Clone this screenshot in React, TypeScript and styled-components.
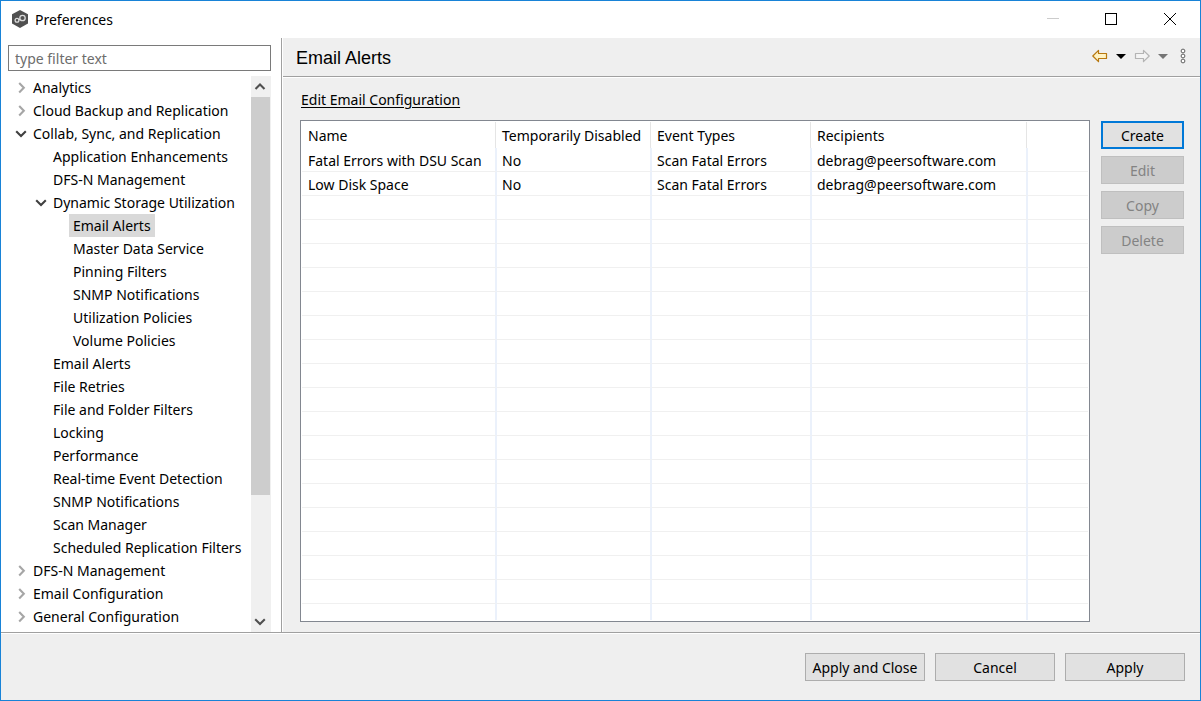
import React, { useState } from "react";
import styled, { createGlobalStyle, css } from "styled-components";

const FONT = '"Noto Sans", "Open Sans", sans-serif';

const GlobalStyle = createGlobalStyle`
  *, *::before, *::after { box-sizing: border-box; }
  body { margin: 0; background: #efefef; }
  body, button, input { font-family: ${FONT}; font-size: 14px; color: #000; }
`;

const Window = styled.div`
  display: flex;
  flex-direction: column;
  min-height: 100vh;
  border: 1px solid #1883d7;
  background: #efefef;
`;

const TitleBar = styled.header`
  display: flex;
  align-items: center;
  height: 37px;
  padding: 0 0 2px 10px;
  gap: 6px;
  background: #fff;
`;

const WindowTitle = styled.h1`
  flex: 1;
  margin: 0;
  padding-top: 2px;
  font-size: 14px;
  font-weight: 400;
  line-height: 20px;
`;

const IconButton = styled.button<{ $width: number; $height: number }>`
  display: flex;
  align-items: center;
  justify-content: center;
  flex: none;
  width: ${(p) => p.$width}px;
  height: ${(p) => p.$height}px;
  padding: 0;
  border: 0;
  background: transparent;
`;

const WindowControls = styled.div`
  display: flex;
`;

const Body = styled.div`
  display: flex;
  flex: 1;
  border-bottom: 1px solid #a0a0a0;
`;

const Sidebar = styled.nav`
  display: flex;
  flex-direction: column;
  flex: none;
  width: 281px;
  padding: 7px 10px 0 7px;
  border-right: 1px solid #a0a0a0;
  background: #fff;
`;

const FilterInput = styled.input`
  height: 26px;
  margin-bottom: 5px;
  padding: 0 6px;
  border: 1px solid #7a7a7a;
  border-radius: 0;
  background: #fff;
  outline: none;
  &::placeholder { color: #6d6d6d; opacity: 1; }
`;

const TreeArea = styled.div`
  display: flex;
  flex: 1;
`;

const TreeList = styled.ul`
  flex: 1;
  margin: 0;
  padding: 0;
  list-style: none;
`;

const TreeRow = styled.div<{ $level: number }>`
  display: flex;
  align-items: center;
  height: 23px;
  padding-left: ${(p) => 4 + p.$level * 20}px;
`;

const TreeSlot = styled.span`
  display: flex;
  justify-content: flex-end;
  flex: none;
  width: 17px;
`;

const TreeLabel = styled.button<{ $selected?: boolean }>`
  height: 23px;
  padding: 0 4px;
  border: 0;
  background: ${(p) => (p.$selected ? "#d9d9d9" : "transparent")};
  line-height: 23px;
  white-space: nowrap;
`;

const Scrollbar = styled.div`
  display: flex;
  flex-direction: column;
  flex: none;
  width: 20px;
  background: #f0f0f0;
`;

const ScrollTrack = styled.div`
  display: flex;
  flex: 1;
  flex-direction: column;
  &::after { content: ""; flex: 9; }
`;

const ScrollThumb = styled.div`
  flex: 31;
  width: 19px;
  background: #cdcdcd;
`;

const Content = styled.main`
  display: flex;
  flex: 1;
  flex-direction: column;
  min-width: 0;
  border-left: 1px solid #fff;
`;

const PageHeader = styled.div`
  display: flex;
  align-items: center;
  justify-content: space-between;
  height: 39px;
  padding: 0 7px 0 13px;
  border-bottom: 1px solid #a0a0a0;
`;

const PageTitle = styled.h2`
  margin: 0;
  padding-top: 2px;
  font-family: "Liberation Sans", Arial, sans-serif;
  font-size: 18px;
  font-weight: 400;
  line-height: 20px;
`;

const NavTools = styled.div`
  display: flex;
  align-items: center;
  padding-bottom: 2px;
`;

const PageBody = styled.div`
  display: flex;
  flex: 1;
  flex-direction: column;
  padding: 12px 16px 10px 17px;
  border-top: 1px solid #fff;
`;

const ConfigLink = styled.a`
  align-self: flex-start;
  margin: 0 0 10px 1px;
  color: #000;
  line-height: 20px;
  text-decoration: underline;
  text-underline-offset: 2px;
`;

const Columns = styled.div`
  display: flex;
  flex: 1;
  gap: 11px;
`;

const TableFrame = styled.div`
  display: flex;
  flex: 1;
  min-width: 0;
  padding: 1px;
  border: 1px solid #828790;
  background: #fff;
`;

const Table = styled.table`
  flex: 1;
  width: 100%;
  border-collapse: separate;
  border-spacing: 0;
  table-layout: fixed;
`;

const cell = css`
  padding: 0 0 0 5px;
  font-weight: 400;
  text-align: left;
  white-space: nowrap;
  &:first-child { padding-left: 6px; }
`;

const HeadCell = styled.th<{ $width?: number }>`
  ${cell}
  width: ${(p) => (p.$width ? `${p.$width}px` : "auto")};
  height: 26px;
  background: ${(p) => (p.$width ? "linear-gradient(#e5e5e5, #e5e5e5) right 1px top 0 / 1px 100% no-repeat" : "none")};
`;

const Cell = styled.td`
  ${cell}
  padding-top: 2px;
  border-right: 2px solid #ebf1fb;
  border-bottom: 1px solid #f0f0f0;
  line-height: 20px;
  &:last-child { border-right: 0; }
`;

const Row = styled.tr<{ $fill?: boolean }>`
  height: ${(p) => (p.$fill ? "auto" : "24px")};
  ${Cell} { ${(p) => p.$fill && "border-bottom: 0;"} }
`;

const Actions = styled.div`
  display: flex;
  flex: none;
  flex-direction: column;
  gap: 7px;
  width: 83px;
  padding-top: 1px;
`;

const PushButton = styled.button<{ $primary?: boolean }>`
  height: 28px;
  padding: 0;
  border: ${(p) => (p.$primary ? "2px solid #0078d7" : "1px solid #adadad")};
  background: #e1e1e1;
  white-space: nowrap;
  &:disabled { border-color: #bfbfbf; background: #ccc; color: #838383; }
`;

const Footer = styled.footer`
  display: flex;
  justify-content: flex-end;
  gap: 10px;
  padding: 19px 15px 19px;
  border-top: 1px solid #fff;
  ${PushButton} { width: 120px; }
`;

function Chevron({ dir, color = "#404040" }: { dir: "up" | "down" | "right"; color?: string }) {
  const d = { up: "M1.5 9 L6 4.5 L10.5 9", down: "M1.2 4.3 L6 9 L10.8 4.3", right: "M4.2 2 L8.8 6.7 L4.2 11.4" }[dir];
  return (
    <svg width="13" height="13" viewBox="0 0 13 13" fill="none" stroke={color} strokeWidth="2.1" aria-hidden="true">
      <path d={d} />
    </svg>
  );
}

function AppLogo() {
  return (
    <svg width="18" height="18" viewBox="0 0 18 18" aria-hidden="true">
      <path d="M9 0 L17 4.3 V13.5 L9 18 L1 13.5 V4.3 Z" fill="#505050" />
      <g fill="none" stroke="#dcdcdc" strokeWidth="1.3">
        <circle cx="11.5" cy="8" r="2.7" />
        <circle cx="6" cy="10.3" r="1.9" />
        <path d="M7.6 9 L9.4 10" />
      </g>
    </svg>
  );
}

type Node = { label: string; open?: boolean; children?: Node[] };

const leaf = (label: string): Node => ({ label });

const TREE: Node[] = [
  { label: "Analytics", children: [] },
  { label: "Cloud Backup and Replication", children: [] },
  {
    label: "Collab, Sync, and Replication",
    open: true,
    children: [
      leaf("Application Enhancements"),
      leaf("DFS-N Management"),
      {
        label: "Dynamic Storage Utilization",
        open: true,
        children: ["Email Alerts", "Master Data Service", "Pinning Filters", "SNMP Notifications", "Utilization Policies", "Volume Policies"].map(leaf),
      },
      ...["Email Alerts", "File Retries", "File and Folder Filters", "Locking", "Performance", "Real-time Event Detection", "SNMP Notifications", "Scan Manager", "Scheduled Replication Filters"].map(leaf),
    ],
  },
  { label: "DFS-N Management", children: [] },
  { label: "Email Configuration", children: [] },
  { label: "General Configuration", children: [] },
];

const SELECTED = "Collab, Sync, and Replication/Dynamic Storage Utilization/Email Alerts";

function TreeItem({ node, level, parent }: { node: Node; level: number; parent: string }) {
  const [open, setOpen] = useState(!!node.open);
  const path = parent ? `${parent}/${node.label}` : node.label;
  return (
    <li>
      <TreeRow $level={level}>
        <TreeSlot>
          {node.children && (
            <IconButton $width={16} $height={23} aria-label={`Toggle ${node.label}`} aria-expanded={open} onClick={() => setOpen(!open)}>
              <Chevron dir={open ? "down" : "right"} color={open ? "#404040" : "#a6a6a6"} />
            </IconButton>
          )}
        </TreeSlot>
        <TreeLabel $selected={path === SELECTED}>{node.label}</TreeLabel>
      </TreeRow>
      {open && node.children && (
        <TreeList>
          {node.children.map((child) => (
            <TreeItem key={child.label} node={child} level={level + 1} parent={path} />
          ))}
        </TreeList>
      )}
    </li>
  );
}

const COLUMNS = [
  { label: "Name", width: 195 },
  { label: "Temporarily Disabled", width: 155 },
  { label: "Event Types", width: 160 },
  { label: "Recipients", width: 216 },
  { label: "" },
];

const ALERTS = [
  ["Fatal Errors with DSU Scan", "No", "Scan Fatal Errors", "debrag@peersoftware.com", ""],
  ["Low Disk Space", "No", "Scan Fatal Errors", "debrag@peersoftware.com", ""],
];

const EMPTY = ["", "", "", "", ""];
const ROWS = [...ALERTS, ...Array.from({ length: 17 }, () => EMPTY)];

export default function App() {
  return (
    <>
      <GlobalStyle />
      <Window>
        <TitleBar>
          <AppLogo />
          <WindowTitle>Preferences</WindowTitle>
          <WindowControls>
            <IconButton $width={58} $height={35} aria-label="Minimize" disabled>
              <svg width="12" height="12"><path d="M0 5.5H12" stroke="#ccc" /></svg>
            </IconButton>
            <IconButton $width={58} $height={35} aria-label="Maximize">
              <svg width="12" height="12" fill="none" stroke="#000"><rect x=".5" y=".5" width="11" height="11" /></svg>
            </IconButton>
            <IconButton $width={60} $height={35} aria-label="Close">
              <svg width="12" height="12" stroke="#000"><path d="M0 0L12 12M12 0L0 12" /></svg>
            </IconButton>
          </WindowControls>
        </TitleBar>
        <Body>
          <Sidebar aria-label="Preference pages">
            <FilterInput type="text" placeholder="type filter text" aria-label="Filter" />
            <TreeArea>
              <TreeList>
                {TREE.map((node) => (
                  <TreeItem key={node.label} node={node} level={0} parent="" />
                ))}
              </TreeList>
              <Scrollbar>
                <IconButton $width={19} $height={21} aria-label="Scroll up"><Chevron dir="up" color="#505050" /></IconButton>
                <ScrollTrack><ScrollThumb /></ScrollTrack>
                <IconButton $width={19} $height={21} aria-label="Scroll down"><Chevron dir="down" color="#505050" /></IconButton>
              </Scrollbar>
            </TreeArea>
          </Sidebar>
          <Content>
            <PageHeader>
              <PageTitle>Email Alerts</PageTitle>
              <NavTools>
                <IconButton $width={22} $height={20} aria-label="Back">
                  <svg width="16" height="14" viewBox="0 0 16 14"><path d="M.8 7L6.5 1.3V4.5H14.5V9.5H6.5V12.7Z" fill="#fff3c4" stroke="#b8780f" strokeWidth="1.2" strokeLinejoin="round" /></svg>
                </IconButton>
                <IconButton $width={20} $height={20} aria-label="Back history">
                  <svg width="10" height="5"><path d="M0 0H10L5 5Z" fill="#000" /></svg>
                </IconButton>
                <IconButton $width={22} $height={20} aria-label="Forward" disabled>
                  <svg width="16" height="14" viewBox="0 0 16 14"><path d="M15.2 7L9.5 1.3V4.5H1.5V9.5H9.5V12.7Z" fill="#f4f4f4" stroke="#b4b4b4" strokeWidth="1.2" strokeLinejoin="round" /></svg>
                </IconButton>
                <IconButton $width={20} $height={20} aria-label="Forward history" disabled>
                  <svg width="10" height="5"><path d="M0 0H10L5 5Z" fill="#757575" /></svg>
                </IconButton>
                <IconButton $width={20} $height={20} aria-label="View menu">
                  <svg width="6" height="16" fill="#fff" stroke="#606060"><circle cx="3" cy="3" r="1.9" /><circle cx="3" cy="8" r="1.9" /><circle cx="3" cy="13" r="1.9" /></svg>
                </IconButton>
              </NavTools>
            </PageHeader>
            <PageBody>
              <ConfigLink href="#email-configuration">Edit Email Configuration</ConfigLink>
              <Columns>
                <TableFrame>
                  <Table>
                    <thead>
                      <tr>
                        {COLUMNS.map((c) => (
                          <HeadCell key={c.label} $width={c.width} scope="col">{c.label}</HeadCell>
                        ))}
                      </tr>
                    </thead>
                    <tbody>
                      {ROWS.map((row, i) => (
                        <Row key={i}>{row.map((text, j) => <Cell key={j}>{text}</Cell>)}</Row>
                      ))}
                      <Row $fill>{EMPTY.map((text, j) => <Cell key={j}>{text}</Cell>)}</Row>
                    </tbody>
                  </Table>
                </TableFrame>
                <Actions>
                  <PushButton $primary>Create</PushButton>
                  <PushButton disabled>Edit</PushButton>
                  <PushButton disabled>Copy</PushButton>
                  <PushButton disabled>Delete</PushButton>
                </Actions>
              </Columns>
            </PageBody>
          </Content>
        </Body>
        <Footer>
          <PushButton>Apply and Close</PushButton>
          <PushButton>Cancel</PushButton>
          <PushButton>Apply</PushButton>
        </Footer>
      </Window>
    </>
  );
}
